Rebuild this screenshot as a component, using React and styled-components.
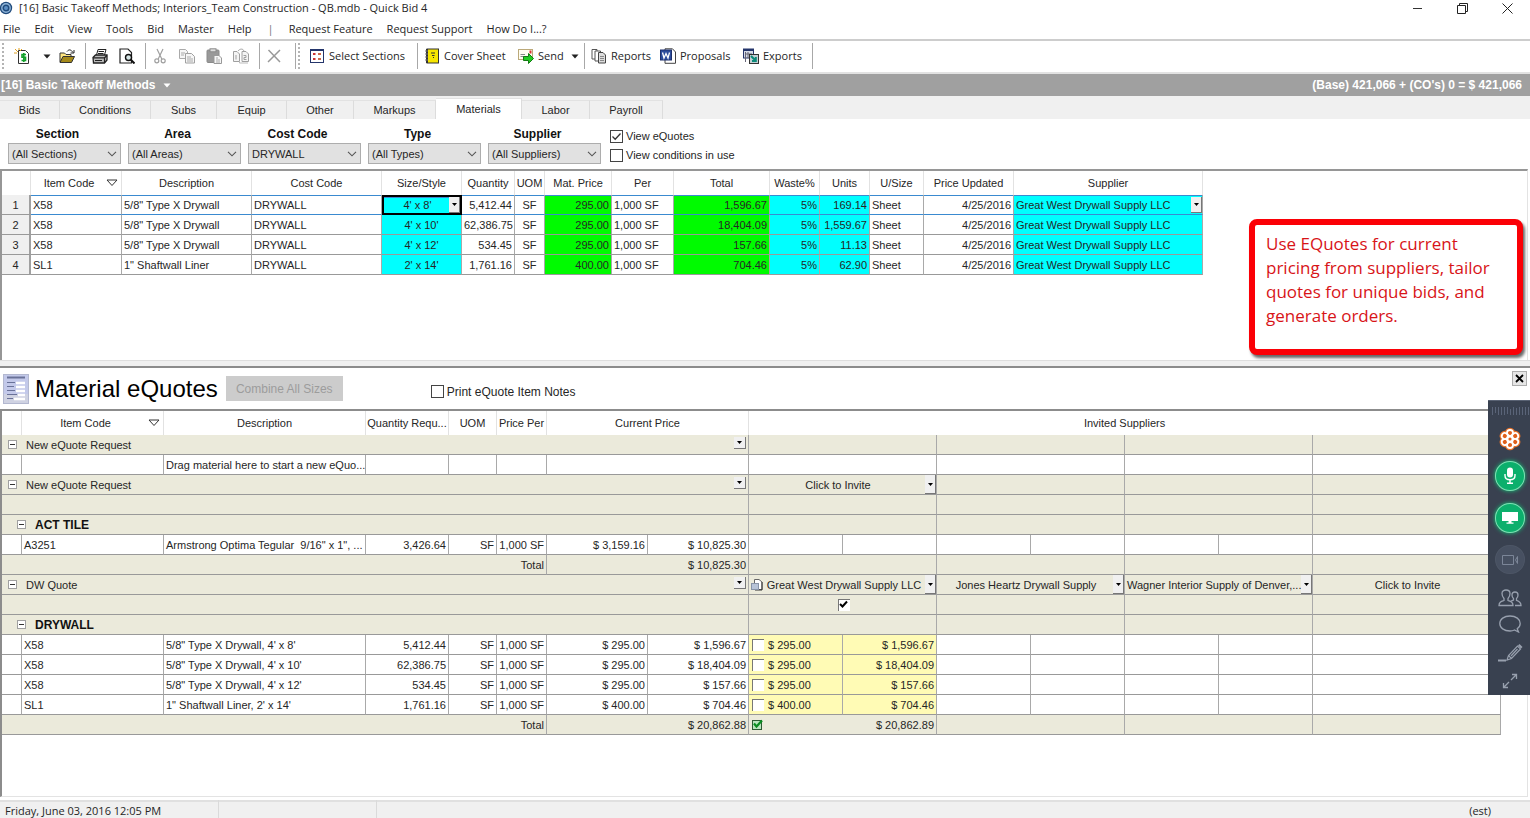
import React from "react";
import styled, { createGlobalStyle, css } from "styled-components";

const TABS = [
  { label: "Bids", width: 60 },
  { label: "Conditions", width: 91 },
  { label: "Subs", width: 66 },
  { label: "Equip", width: 70 },
  { label: "Other", width: 67 },
  { label: "Markups", width: 82 },
  { label: "Materials", width: 86, active: true },
  { label: "Labor", width: 68 },
  { label: "Payroll", width: 73 },
];

const FILTERS = [
  ["Section", "(All Sections)"],
  ["Area", "(All Areas)"],
  ["Cost Code", "DRYWALL"],
  ["Type", "(All Types)"],
  ["Supplier", "(All Suppliers)"],
];

const MATERIAL_COLS = [
  { label: "", width: 29 },
  { label: "Item Code", width: 91, sort: true },
  { label: "Description", width: 130 },
  { label: "Cost Code", width: 130 },
  { label: "Size/Style", width: 80, align: "center", bg: "#00ffff" },
  { label: "Quantity", width: 53, align: "right" },
  { label: "UOM", width: 30, align: "center" },
  { label: "Mat. Price", width: 67, align: "right", bg: "#00fb00" },
  { label: "Per", width: 62 },
  { label: "Total", width: 96, align: "right", bg: "#00fb00" },
  { label: "Waste%", width: 50, align: "right", bg: "#00ffff" },
  { label: "Units", width: 50, align: "right", bg: "#00ffff" },
  { label: "U/Size", width: 54 },
  { label: "Price Updated", width: 90, align: "right" },
  { label: "Supplier", width: 189, bg: "#00ffff" },
];

const MATERIALS = [
  ["1", "X58", "5/8\" Type X Drywall", "DRYWALL", "4' x 8'", "5,412.44", "SF", "295.00", "1,000 SF", "1,596.67", "5%", "169.14", "Sheet", "4/25/2016", "Great West Drywall Supply LLC"],
  ["2", "X58", "5/8\" Type X Drywall", "DRYWALL", "4' x 10'", "62,386.75", "SF", "295.00", "1,000 SF", "18,404.09", "5%", "1,559.67", "Sheet", "4/25/2016", "Great West Drywall Supply LLC"],
  ["3", "X58", "5/8\" Type X Drywall", "DRYWALL", "4' x 12'", "534.45", "SF", "295.00", "1,000 SF", "157.66", "5%", "11.13", "Sheet", "4/25/2016", "Great West Drywall Supply LLC"],
  ["4", "SL1", "1\" Shaftwall Liner", "DRYWALL", "2' x 14'", "1,761.16", "SF", "400.00", "1,000 SF", "704.46", "5%", "62.90", "Sheet", "4/25/2016", "Great West Drywall Supply LLC"],
];

const QUOTE_COLS = [20, 142, 202, 83, 48, 50, 101, 101, 94, 94, 94, 94, 94, 94, 94, 94];

const DRYWALL_ITEMS = [
  ["X58", "5/8\" Type X Drywall, 4' x 8'", "5,412.44", "$ 295.00", "$ 1,596.67"],
  ["X58", "5/8\" Type X Drywall, 4' x 10'", "62,386.75", "$ 295.00", "$ 18,404.09"],
  ["X58", "5/8\" Type X Drywall, 4' x 12'", "534.45", "$ 295.00", "$ 157.66"],
  ["SL1", "1\" Shaftwall Liner, 2' x 14'", "1,761.16", "$ 400.00", "$ 704.46"],
];

const App = () => {
  return (
    <React.Fragment>
      <GlobalStyle />
      <Window>
        <TitleBar>
          <AppIcon />
          <Title>[16] Basic Takeoff Methods; Interiors_Team Construction - QB.mdb - Quick Bid 4</Title>
          <WindowButtons />
        </TitleBar>
        <MenuBar>
          {["File", "Edit", "View", "Tools", "Bid", "Master", "Help"].map((m) => (
            <MenuItem key={m}>{m}</MenuItem>
          ))}
          <MenuBreak>|</MenuBreak>
          {["Request Feature", "Request Support", "How Do I...?"].map((m) => (
            <MenuItem key={m}>{m}</MenuItem>
          ))}
        </MenuBar>
        <Toolbar />
        <BidBar>
          <BidName>
            [16] Basic Takeoff Methods
            <Caret color="#fff" />
          </BidName>
          <span>(Base) 421,066 + (CO's) 0 = $ 421,066</span>
        </BidBar>
        <TabStrip role="tablist">
          {TABS.map((t) => (
            <Tab key={t.label} role="tab" aria-selected={!!t.active} $width={t.width} $active={t.active}>
              {t.label}
            </Tab>
          ))}
        </TabStrip>
        <Filters>
          {FILTERS.map(([label, value]) => (
            <Filter key={label}>
              <FilterLabel>{label}</FilterLabel>
              <SelectBox>
                <Select defaultValue={value}>
                  <option>{value}</option>
                </Select>
                <SelectArrow viewBox="0 0 10 6">
                  <path d="M1 0.8 L5 4.8 L9 0.8" fill="none" stroke="#555" strokeWidth="1.1" />
                </SelectArrow>
              </SelectBox>
            </Filter>
          ))}
          <CheckList>
            <Check label="View eQuotes" checked />
            <Check label="View conditions in use" />
          </CheckList>
        </Filters>
        <MaterialPane>
          <MaterialGrid />
        </MaterialPane>
        <Splitter />
        <QuotePane>
          <QuoteHeader>
            <QuoteIcon />
            <QuoteTitle>Material eQuotes</QuoteTitle>
            <CombineButton disabled>Combine All Sizes</CombineButton>
            <Check label="Print eQuote Item Notes" large />
            <CloseButton aria-label="Close">
              <svg width="9" height="9" viewBox="0 0 9 9">
                <path d="M1 1 L8 8 M8 1 L1 8" stroke="#000" strokeWidth="1.8" />
              </svg>
            </CloseButton>
          </QuoteHeader>
          <QuoteBody>
            <QuoteGrid />
          </QuoteBody>
        </QuotePane>
        <StatusBar>
          <StatusCell $width={219}>Friday, June 03, 2016 12:05 PM</StatusCell>
          <StatusCell $width={158} />
          <StatusEnd>(est)</StatusEnd>
        </StatusBar>
        <Callout>
          Use EQuotes for current pricing from suppliers, tailor quotes for unique bids, and generate orders.
        </Callout>
        <MeetingPanel />
      </Window>
    </React.Fragment>
  );
};

const Check = ({ label, checked, large }) => (
  <CheckLabel $large={large}>
    <CheckBox>
      <input type="checkbox" defaultChecked={checked} />
      {checked && (
        <svg width="11" height="11" viewBox="0 0 11 11">
          <path d="M1.5 5.5 L4.2 8.2 L9.5 2.5" fill="none" stroke="#333" strokeWidth="1.3" />
        </svg>
      )}
    </CheckBox>
    {label}
  </CheckLabel>
);

const Caret = ({ color = "#222" }) => (
  <svg width="8" height="5" viewBox="0 0 8 5">
    <path d="M0.5 0.5 H7.5 L4 4.5 Z" fill={color} />
  </svg>
);

const SmallCaret = () => (
  <svg width="5" height="3" viewBox="0 0 5 3">
    <path d="M0 0 H5 L2.5 3 Z" fill="#000" />
  </svg>
);

const SortArrow = () => (
  <svg width="12" height="8" viewBox="0 0 12 8">
    <path d="M1 1 H11 L6 6.5 Z" fill="none" stroke="#333" />
  </svg>
);

const MaterialGrid = () => (
  <Grid>
    <colgroup>
      {MATERIAL_COLS.map((c, i) => (
        <Col key={i} $width={c.width} />
      ))}
    </colgroup>
    <thead>
      <tr>
        {MATERIAL_COLS.map((c, i) => (
          <HeadCell key={i}>
            {c.sort ? (
              <SortHead>
                <span>{c.label}</span>
                <SortArrow />
              </SortHead>
            ) : (
              c.label
            )}
          </HeadCell>
        ))}
      </tr>
    </thead>
    <tbody>
      {MATERIALS.map((row, r) => (
        <tr key={r}>
          {row.map((value, i) => {
            const col = MATERIAL_COLS[i];
            if (i === 0) {
              return <RowNumber key={i}>{value}</RowNumber>;
            }
            if (r === 0 && (i === 4 || i === 14)) {
              return (
                <Cell key={i} $bg={col.bg} $selected $focused={i === 4} $flush>
                  <DropCell $align={i === 4 ? "center" : "left"}>
                    <span>{value}</span>
                    <CellDrop aria-label={`Choose ${col.label}`}>
                      <SmallCaret />
                    </CellDrop>
                  </DropCell>
                </Cell>
              );
            }
            return (
              <Cell key={i} $align={col.align} $bg={col.bg} $selected={r === 0}>
                {value}
              </Cell>
            );
          })}
        </tr>
      ))}
    </tbody>
  </Grid>
);

const GroupLead = ({ name }) => (
  <Cell colSpan={8} $bg={BEIGE} $flush>
    <GroupBox>
      <Expander aria-label={`Collapse ${name}`} />
      <GroupName>{name}</GroupName>
      <GroupDrop aria-label={`${name} options`}>
        <SmallCaret />
      </GroupDrop>
    </GroupBox>
  </Cell>
);

const Supplier = ({ name, drop, icon }) => (
  <Cell colSpan={2} $bg={BEIGE} $flush>
    <SupplierBox>
      {icon && <DocIcon />}
      <SupplierName>{name}</SupplierName>
      {drop && (
        <CellDrop aria-label={`${name} options`}>
          <SmallCaret />
        </CellDrop>
      )}
    </SupplierBox>
  </Cell>
);

const EmptySuppliers = ({ from = 0, bg }) =>
  [0, 1, 2, 3].slice(from).map((n) => <Cell key={n} colSpan={2} $bg={bg} />);

const EmptyPrices = ({ from = 0 }) => (
  <React.Fragment>
    {[0, 1, 2].slice(from).map((n) => (
      <React.Fragment key={n}>
        <Cell />
        <Cell />
      </React.Fragment>
    ))}
    <Cell colSpan={2} />
  </React.Fragment>
);

const SectionRow = ({ name }) => (
  <tr>
    <Cell colSpan={8} $bg={BEIGE} $flush>
      <GroupBox $nested>
        <Expander aria-label={`Collapse ${name}`} />
        <GroupName $bold>{name}</GroupName>
      </GroupBox>
    </Cell>
    <EmptySuppliers bg={BEIGE} />
  </tr>
);

const ItemCells = ({ item }) => {
  const [code, description, quantity, price, total] = item;
  return (
    <React.Fragment>
      <Cell />
      <Cell>{code}</Cell>
      <Cell $tight>{description}</Cell>
      <Cell $align="right">{quantity}</Cell>
      <Cell $align="right">SF</Cell>
      <Cell $align="right">1,000 SF</Cell>
      <Cell $align="right">{price}</Cell>
      <Cell $align="right">{total}</Cell>
    </React.Fragment>
  );
};

const QuoteGrid = () => (
  <Grid>
    <colgroup>
      {QUOTE_COLS.map((w, i) => (
        <Col key={i} $width={w} />
      ))}
    </colgroup>
    <thead>
      <tr>
        <HeadCell />
        <HeadCell>
          <SortHead>
            <span>Item Code</span>
            <SortArrow />
          </SortHead>
        </HeadCell>
        <HeadCell>Description</HeadCell>
        <HeadCell>Quantity Requ...</HeadCell>
        <HeadCell>UOM</HeadCell>
        <HeadCell>Price Per</HeadCell>
        <HeadCell colSpan={2}>Current Price</HeadCell>
        <HeadCell colSpan={8}>Invited Suppliers</HeadCell>
      </tr>
    </thead>
    <tbody>
      <tr>
        <GroupLead name="New eQuote Request" />
        <EmptySuppliers bg={BEIGE} />
      </tr>
      <tr>
        <Cell />
        <Cell />
        <Cell $tight>Drag material here to start a new eQuo...</Cell>
        <Cell />
        <Cell />
        <Cell />
        <Cell colSpan={2} />
        <EmptySuppliers />
      </tr>
      <tr>
        <GroupLead name="New eQuote Request" />
        <Supplier name="Click to Invite" drop />
        <EmptySuppliers from={1} bg={BEIGE} />
      </tr>
      <tr>
        <Cell colSpan={8} $bg={BEIGE} />
        <EmptySuppliers bg={BEIGE} />
      </tr>
      <SectionRow name="ACT TILE" />
      <tr>
        <ItemCells item={["A3251", "Armstrong Optima Tegular\u00a0 9/16\" x 1\", ...", "3,426.64", "$ 3,159.16", "$ 10,825.30"]} />
        <EmptyPrices />
      </tr>
      <tr>
        <Cell colSpan={6} $align="right" $bg={BEIGE}>Total</Cell>
        <Cell colSpan={2} $align="right" $bg={BEIGE}>$ 10,825.30</Cell>
        <EmptySuppliers bg={BEIGE} />
      </tr>
      <tr>
        <GroupLead name="DW Quote" />
        <Supplier name="Great West Drywall Supply LLC" icon drop />
        <Supplier name="Jones Heartz Drywall Supply" drop />
        <Supplier name="Wagner Interior Supply of Denver,..." drop />
        <Supplier name="Click to Invite" />
      </tr>
      <tr>
        <Cell colSpan={8} $bg={BEIGE} />
        <Cell colSpan={2} $bg={BEIGE} $flush>
          <SupplierBox $center>
            <SunkenCheck>
              <input type="checkbox" aria-label="Use this supplier" defaultChecked />
              <svg width="9" height="9" viewBox="0 0 9 9">
                <path d="M1 4 L3.5 6.5 L8 1.5" fill="none" stroke="#000" strokeWidth="2" />
              </svg>
            </SunkenCheck>
          </SupplierBox>
        </Cell>
        <EmptySuppliers from={1} bg={BEIGE} />
      </tr>
      <SectionRow name="DRYWALL" />
      {DRYWALL_ITEMS.map((item, i) => (
        <tr key={i}>
          <ItemCells item={item} />
          <Cell $bg="#fffbb5" $flush>
            <OfferBox>
              <SunkenCheck>
                <input type="checkbox" aria-label={`Accept ${item[1]}`} />
              </SunkenCheck>
              {item[3]}
            </OfferBox>
          </Cell>
          <Cell $bg="#fffbb5" $align="right">{item[4]}</Cell>
          <EmptyPrices from={1} />
        </tr>
      ))}
      <tr>
        <Cell colSpan={6} $align="right" $bg={BEIGE}>Total</Cell>
        <Cell colSpan={2} $align="right" $bg={BEIGE}>$ 20,862.88</Cell>
        <Cell colSpan={2} $bg={BEIGE} $flush>
          <TotalBox>
            <svg width="11" height="11" viewBox="0 0 11 11">
              <rect x="0.5" y="1.5" width="9" height="9" fill="#b9e6bf" stroke="#2c5c34" />
              <path d="M2 4.5 L4.5 7.5 L10 1.5" fill="none" stroke="#0a8d22" strokeWidth="2.2" />
            </svg>
            <span>$ 20,862.89</span>
          </TotalBox>
        </Cell>
        <EmptySuppliers from={1} bg={BEIGE} />
      </tr>
    </tbody>
  </Grid>
);

const Toolbar = () => (
  <ToolRow>
    <ToolGroup $left={8} $right={9} $grip>
      <Tool $width={28} aria-label="New bid">
        <Icon>
          <path d="M4.5 2.5 H11.5 L14.5 5.5 V15.5 H4.5 Z" fill="#fff" stroke="#333" />
          <path d="M1 1 L4 4 M0 5 H3 M5 0 V2 M8 1 L6 3" stroke="#e0a020" />
          <path d="M12 6.5 H8 V9.3 H11.5 V12.5 H7.5 M9.8 5 V14" fill="none" stroke="#12a02a" strokeWidth="1.6" />
        </Icon>
      </Tool>
      <Tool $width={22} aria-label="New bid options">
        <Caret />
      </Tool>
      <Tool $width={18} aria-label="Open">
        <Icon>
          <path d="M1 14 V5 H5.5 L7 6.5 H12 V8" fill="#ffe680" stroke="#333" />
          <path d="M1 14.5 L4 8.5 H15.5 L12.5 14.5 Z" fill="#a58a1a" stroke="#333" />
          <path d="M8 3.5 C10 1 12 1.5 14 4.5 M15 2 V5 H11.5" fill="none" stroke="#222" />
        </Icon>
      </Tool>
    </ToolGroup>
    <ToolGroup $right={5}>
      <Tool $width={27} aria-label="Print">
        <Icon>
          <path d="M4.5 7 L6 1.5 H14 L12.5 7" fill="#fff" stroke="#222" />
          <path d="M6.5 3.5 H12 M6 5.5 H11.5" stroke="#222" />
          <path d="M1 9.5 L3.5 7 H15 V12 L12.5 15 H1.5 Z" fill="#bbb" stroke="#222" strokeWidth="1.3" />
          <path d="M1 9.8 H12.5 L15 7.5 M12.5 10 V15 M3 12.5 H10" fill="none" stroke="#222" strokeWidth="1.2" />
        </Icon>
      </Tool>
      <Tool $width={27} aria-label="Print preview">
        <Icon>
          <path d="M1 1 H9 L12.5 4.5 V15 H1 Z" fill="#fff" stroke="#222" strokeWidth="1.2" />
          <circle cx="9.5" cy="9.5" r="3" fill="#d6e6e6" stroke="#111" strokeWidth="1.4" />
          <path d="M11.5 11.5 L15.5 15.5" stroke="#111" strokeWidth="2" />
        </Icon>
      </Tool>
    </ToolGroup>
    <ToolGroup $right={5}>
      <Tool $width={27} aria-label="Cut">
        <Icon>
          <path d="M5 1 L9.8 11 M11 1 L6.2 11" stroke="#a0a0a0" strokeWidth="1.2" />
          <circle cx="4.8" cy="12.8" r="2" fill="none" stroke="#a0a0a0" strokeWidth="1.2" />
          <circle cx="11.2" cy="12.8" r="2" fill="none" stroke="#a0a0a0" strokeWidth="1.2" />
        </Icon>
      </Tool>
      <Tool $width={27} aria-label="Copy">
        <Icon>
          <path d="M0.5 1.5 H6.5 L8.5 3.5 V10.5 H0.5 Z" fill="#f6f6f6" stroke="#aaa" />
          <path d="M6.5 5.5 H12.5 L15.5 8.5 V15 H6.5 Z" fill="#f6f6f6" stroke="#a0a0a0" />
          <path d="M2 5 H6 M2 7 H5 M8 9 H12 M8 11 H14 M8 13 H14" stroke="#aaa" />
        </Icon>
      </Tool>
      <Tool $width={27} aria-label="Paste">
        <Icon>
          <rect x="1" y="2" width="12" height="12.5" rx="1" fill="#999" stroke="#8a8a8a" />
          <rect x="4" y="0.8" width="6" height="3" fill="#ddd" stroke="#8a8a8a" />
          <path d="M8 7.5 H13 L15.5 10 V15.5 H8 Z" fill="#f6f6f6" stroke="#999" />
          <path d="M10 10 H12 M10 12 H14 M10 14 H14" stroke="#aaa" />
        </Icon>
      </Tool>
      <Tool $width={27} aria-label="Duplicate">
        <Icon>
          <path d="M0.5 3.5 H4 L6.5 6 V13.5 H0.5 Z M9 3.5 H13 L15.5 6 V13.5 H9 Z" fill="#f4f4f4" stroke="#a0a0a0" />
          <path d="M3 7 V11.5 M5 3 C7 0.5 10 0.5 11 3 M10.5 7.5 H13 V9.5 H11 V11.5 H13.5" fill="none" stroke="#a0a0a0" />
          <path d="M6.5 13.5 V15 H15" fill="none" stroke="#bbb" />
        </Icon>
      </Tool>
    </ToolGroup>
    <ToolGroup $right={8}>
      <Tool $width={27} aria-label="Delete">
        <Icon>
          <path d="M2.5 2 L14 14 M14 2 L2 14" stroke="#999" strokeWidth="1.5" />
        </Icon>
      </Tool>
    </ToolGroup>
    <ToolGroup $left={13} $grip>
      <Tool $width={108} $text>
        <Icon>
          <rect x="1.5" y="1.5" width="13" height="13" fill="#fff" stroke="#24356b" />
          <path d="M1.5 2 H14.5" stroke="#24356b" strokeWidth="2" />
          <path d="M4 6 H6.5 M4 11 H6.5" stroke="#c33" strokeWidth="2" />
          <path d="M9 6 H12 M9 11 H12" stroke="#cc6a4a" strokeWidth="2" />
        </Icon>
        Select Sections
      </Tool>
    </ToolGroup>
    <ToolGroup $left={6}>
      <Tool $width={94} $text>
        <Icon>
          <rect x="3" y="1" width="11.5" height="14" fill="#f7e600" stroke="#333" />
          <path d="M3 1 V15" stroke="#333" strokeWidth="2" />
          <path d="M1 3 H4 M1 6 H4 M1 9 H4 M1 12 H4" stroke="#777" />
          <path d="M7 5 H11 M8 7.5 H10.5 M9 9.5 H10" stroke="#333" />
        </Icon>
        Cover Sheet
      </Tool>
      <Tool $width={48} $text>
        <Icon>
          <rect x="0.5" y="1.5" width="14" height="10" fill="#fffdf0" stroke="#bba97a" />
          <path d="M2.5 6.5 H7 M2.5 8.5 H6" stroke="#888" />
          <rect x="11.5" y="2.5" width="2" height="3" fill="#d33" />
          <path d="M5.5 8.5 H10.5 V5.5 L15.5 10.5 L10.5 15.5 V12.5 H5.5 Z" fill="#22cc22" stroke="#127a12" />
        </Icon>
        Send
      </Tool>
      <Tool $width={18} aria-label="Send options">
        <Caret />
      </Tool>
    </ToolGroup>
    <ToolGroup $left={6}>
      <Tool $width={69} $text>
        <Icon>
          <path d="M1 1.5 H6 V11 H1 Z" fill="#fff" stroke="#555" />
          <path d="M4 3 H9.5 V13 H4 Z" fill="#fff" stroke="#555" />
          <path d="M7.5 4.5 H12 L14.5 7 V15 H7.5 Z" fill="#ddd" stroke="#444" />
          <path d="M9 8.5 H13 M9 10.5 H13 M9 12.5 H13" stroke="#888" />
        </Icon>
        Reports
      </Tool>
      <Tool $width={83} $text>
        <Icon>
          <path d="M5 0.8 H12.5 L15.5 4 V15.3 H5 Z" fill="#fff" stroke="#444" />
          <rect x="0.5" y="2" width="11" height="10" fill="#2c4c9c" stroke="#1c2f6c" />
          <path d="M2.5 4.5 L4 10 L6 5.5 L8 10 L9.5 4.5" fill="none" stroke="#fff" strokeWidth="1.3" />
        </Icon>
        Proposals
      </Tool>
      <Tool $width={69} $text>
        <Icon>
          <rect x="0.5" y="1" width="10" height="9" fill="#d5dbe8" stroke="#24356b" />
          <path d="M0.5 2 H10.5" stroke="#24356b" strokeWidth="2" />
          <path d="M2.5 4 V14 M5 4 V10 M2 6 H9" stroke="#667" />
          <rect x="6.5" y="6.5" width="9" height="9" fill="#c3cfd4" stroke="#333" />
          <path d="M8 8 L12.5 12.5 M12.8 9 V13 H9" fill="none" stroke="#0a8a7a" strokeWidth="2" />
        </Icon>
        Exports
      </Tool>
    </ToolGroup>
  </ToolRow>
);

const AppIcon = () => (
  <svg width="13" height="14" viewBox="0 0 13 14">
    <circle cx="6" cy="7" r="6.2" fill="#1f4a7c" />
    <circle cx="6" cy="7" r="4.2" fill="none" stroke="#8fb4d8" strokeWidth="1.4" />
    <circle cx="6" cy="7" r="2" fill="#5d8fc4" />
  </svg>
);

const WindowButtons = () => (
  <WinButtons>
    <button aria-label="Minimize">
      <svg width="11" height="11" viewBox="0 0 11 11">
        <path d="M1 5.5 H10" stroke="#333" />
      </svg>
    </button>
    <button aria-label="Restore">
      <svg width="11" height="11" viewBox="0 0 11 11">
        <path d="M2.5 2.5 V0.5 H10.5 V8.5 H8.5 M0.5 2.5 H8.5 V10.5 H0.5 Z" fill="none" stroke="#222" />
      </svg>
    </button>
    <button aria-label="Close window">
      <svg width="11" height="11" viewBox="0 0 11 11">
        <path d="M0.5 0.5 L10.5 10.5 M10.5 0.5 L0.5 10.5" stroke="#222" />
      </svg>
    </button>
  </WinButtons>
);

const QuoteIcon = () => (
  <svg width="26" height="30" viewBox="0 0 26 30">
    <rect x="0.5" y="0.5" width="25" height="29" fill="#c3c9ea" stroke="#b3b8d0" />
    <rect x="1" y="20" width="24" height="9" fill="#cfd2e2" />
    <path d="M4 3.5 H22" stroke="#6a7299" strokeWidth="2" />
    <path d="M13 9 H22 M13 13 H22 M13 17 H22 M15 21 H22 M11 25 H22" stroke="#fff" strokeWidth="2.4" />
    <path d="M4 8.5 H12 M4 12.5 H11 M4 16.5 H12 M4 20.5 H14 M4 24.5 H10" stroke="#6a7299" strokeWidth="1.2" />
  </svg>
);

const DocIcon = () => (
  <svg width="12" height="12" viewBox="0 0 12 12">
    <path d="M3.5 0.5 H8 L11 3 V10.5 H3.5 Z" fill="#fff" stroke="#666" />
    <path d="M11 3 V11 H4" fill="none" stroke="#333" />
    <rect x="0.5" y="4.5" width="7" height="6" fill="#b8c4d8" stroke="#8894a8" />
  </svg>
);

const MeetingPanel = () => (
  <Panel>
    <svg width="38" height="10" viewBox="0 0 38 10">
      <path
        d="M1.5 1 V9 M4.5 1 V7 M7.5 1 V9 M10.5 1 V9 M13.5 1 V9 M16.5 1 V8 M19.5 3 V9 M22.5 1 V9 M25.5 2 V9 M28.5 1 V9 M31.5 1 V9 M34.5 1 V9 M37.5 1 V9"
        stroke="#5a6478"
      />
    </svg>
    <PanelButton aria-label="Meeting" $height={46}>
      <svg width="24" height="24" viewBox="0 0 24 24">
        {[0, 60, 120, 180, 240, 300].map((a) => (
          <circle key={a} cx="12" cy="6" r="5.2" fill="#e8732a" transform={`rotate(${a} 12 12)`} />
        ))}
        {[0, 60, 120, 180, 240, 300].map((a) => (
          <circle key={a} cx="12" cy="6" r="3" fill="#e0601a" stroke="#fff" strokeWidth="1.8" transform={`rotate(${a} 12 12)`} />
        ))}
        <circle cx="12" cy="12" r="2.4" fill="#e0601a" stroke="#fff" strokeWidth="1.6" />
      </svg>
    </PanelButton>
    <RoundButton aria-label="Microphone" $on>
      <svg width="16" height="18" viewBox="0 0 16 18">
        <rect x="5" y="0.5" width="6" height="10" rx="3" fill="#fff" />
        <path d="M3 7 V8.5 C3 11.5 5 12.8 8 12.8 C11 12.8 13 11.5 13 8.5 V7 M8 13 V16 M5 16.2 H11" fill="none" stroke="#fff" strokeWidth="1.4" />
      </svg>
    </RoundButton>
    <RoundButton aria-label="Share screen" $on>
      <svg width="18" height="14" viewBox="0 0 18 14">
        <path d="M1 1 H17 V10 H1 Z M7.5 10 H10.5 V11.5 H12.5 V12.8 H5.5 V11.5 H7.5 Z" fill="#fff" />
      </svg>
    </RoundButton>
    <RoundButton aria-label="Camera">
      <svg width="18" height="12" viewBox="0 0 18 12">
        <path d="M1.5 1.5 H12.5 V10.5 H1.5 Z M16.5 2.5 L14.5 6 L16.5 9.5 Z" fill="none" stroke="#7c8698" />
      </svg>
    </RoundButton>
    <PanelButton aria-label="Attendees" $height={24}>
      <svg width="24" height="18" viewBox="0 0 24 18">
        <path d="M1 16.5 C1 13 3 12.5 6 11.5 V9.5 C4.5 8 4 6 4 4.5 C4 2 6 1 8 1 C10 1 12 2 12 4.5 C12 6 11.5 8 10 9.5 V11.5 C13 12.5 15 13 15 16.5 Z" fill="none" stroke="#98a0ae" strokeWidth="1.3" />
        <path d="M13 12 C14 11.7 15 11.5 15.5 11 V9.5 C14.3 8.5 14 7 14 6 C14 4 15.3 3 17 3 C18.7 3 20 4 20 6 C20 7 19.7 8.5 18.5 9.5 V11.3 C21 12 23 12.8 23 16.5 H17" fill="none" stroke="#98a0ae" strokeWidth="1.3" />
      </svg>
    </PanelButton>
    <PanelButton aria-label="Chat" $height={28}>
      <svg width="24" height="18" viewBox="0 0 24 18">
        <path d="M16.5 15 C15 15.7 13.6 16 12 16 C6 16 1.8 12.8 1.8 8.5 C1.8 4.2 6 1 12 1 C18 1 22.2 4.2 22.2 8.5 C22.2 10.5 21 12.5 19.2 13.8 L20.5 17 Z" fill="none" stroke="#98a0ae" strokeWidth="1.3" />
      </svg>
    </PanelButton>
    <PanelButton aria-label="Draw" $height={30}>
      <svg width="26" height="20" viewBox="0 0 26 20">
        <path d="M1 17.5 H9" stroke="#98a0ae" strokeWidth="2" />
        <path d="M10 17 L11.5 12.5 L20.5 3 L23.5 6 L14.5 15.5 Z M11.5 12.5 L14.5 15.5 M20.5 6 L14 13" fill="none" stroke="#98a0ae" strokeWidth="1.2" />
        <path d="M21 2.5 L22.5 1 L25.5 4 L24 5.5 Z" fill="#98a0ae" />
      </svg>
    </PanelButton>
    <PanelButton aria-label="Full screen" $height={28}>
      <svg width="16" height="16" viewBox="0 0 16 16">
        <path d="M9 7 L14.5 1.5 M10 1.5 H14.5 V6 M7 9 L1.5 14.5 M1.5 10 V14.5 H6" fill="none" stroke="#98a0ae" strokeWidth="1.3" />
      </svg>
    </PanelButton>
  </Panel>
);

const BEIGE = "#ebeadb";
const UI_FONT = `"Open Sans", "Noto Sans", sans-serif`;
const GRID_FONT = `"Liberation Sans", Arial, sans-serif`;

const GlobalStyle = createGlobalStyle`
  * {
    box-sizing: border-box;
  }

  body {
    margin: 0;
    background: #fff;
    color: #262626;
    font: 11px/14px ${GRID_FONT};
  }

  button, input, select {
    margin: 0;
    padding: 0;
    border: 0;
    background: none;
    color: inherit;
    font: inherit;
  }

  svg {
    display: block;
    flex: none;
  }
`;

const Window = styled.div`
  position: relative;
  display: flex;
  flex-direction: column;
  height: 100vh;
  overflow: hidden;
`;

const TitleBar = styled.header`
  display: flex;
  align-items: center;
  gap: 6px;
  height: 16px;
  font-family: ${UI_FONT};
`;

const Title = styled.span`
  flex: 1;
`;

const WinButtons = styled.div`
  display: flex;

  button {
    display: flex;
    justify-content: center;
    width: 45px;
  }
`;

const MenuBar = styled.nav`
  display: flex;
  align-items: center;
  gap: 14px;
  height: 25px;
  padding: 2px 0 0 3px;
  border-bottom: 2px solid #cdcdcd;
  font-family: ${UI_FONT};
`;

const MenuItem = styled.button`
  white-space: nowrap;
`;

const MenuBreak = styled.span`
  padding: 0 1px 0 2px;
  color: #777;
`;

const ToolRow = styled.div`
  display: flex;
  height: 33px;
  padding: 2px 0 3px;
  border-bottom: 2px solid #e2e2e2;
`;

const ToolGroup = styled.div`
  display: flex;
  align-items: center;
  padding-left: ${(props) => props.$left || 0}px;
  padding-right: ${(props) => props.$right || 0}px;
  border-right: 1px solid #a8a8a8;
  ${(props) =>
    props.$grip &&
    css`
      background: repeating-linear-gradient(#b4b4b4 0 2px, #fff 2px 4px) 2px 0 / 2px 100% no-repeat;
    `}
`;

const Tool = styled.button`
  display: flex;
  align-items: center;
  justify-content: ${(props) => (props.$text ? "flex-start" : "center")};
  gap: 4px;
  width: ${(props) => props.$width}px;
  font-family: ${UI_FONT};
  white-space: nowrap;
`;

const Icon = styled.svg.attrs({ width: 16, height: 16, viewBox: "0 0 16 16" })``;

const BidBar = styled.div`
  display: flex;
  align-items: center;
  justify-content: space-between;
  height: 22px;
  padding: 0 8px 0 1px;
  background: #a0a0a0;
  color: #fff;
  font-size: 12px;
  font-weight: bold;
`;

const BidName = styled.span`
  display: flex;
  align-items: center;
  gap: 8px;
`;

const TabStrip = styled.div`
  display: flex;
  align-items: flex-end;
  height: 23px;
  padding-top: 2px;
  background: #f0f0f0;
`;

const Tab = styled.button`
  align-self: ${(props) => (props.$active ? "stretch" : "flex-end")};
  width: ${(props) => props.$width}px;
  height: ${(props) => (props.$active ? "auto" : "19px")};
  border-right: 1px solid #dcdcdc;
  border-top: 1px solid #e2e2e2;
  background: ${(props) => (props.$active ? "#fff" : "#f0f0f0")};
`;

const Filters = styled.section`
  display: flex;
  gap: 7px;
  height: 50px;
  padding: 8px 8px 0;
`;

const Filter = styled.label`
  width: 113px;
`;

const FilterLabel = styled.span`
  display: block;
  height: 16px;
  padding-right: 14px;
  color: #111;
  font-size: 12px;
  font-weight: bold;
  text-align: center;
`;

const SelectBox = styled.span`
  display: grid;
  align-items: center;
`;

const Select = styled.select`
  grid-area: 1 / 1;
  width: 100%;
  height: 21px;
  padding: 0 3px;
  appearance: none;
  border: 1px solid #adadad;
  background: #e1e1e1;
`;

const SelectArrow = styled.svg`
  grid-area: 1 / 1;
  justify-self: end;
  width: 10px;
  height: 6px;
  margin-right: 4px;
  pointer-events: none;
`;

const CheckList = styled.div`
  display: flex;
  flex-direction: column;
  gap: 5px;
  padding: 2px 0 0 2px;
`;

const CheckLabel = styled.label`
  display: flex;
  align-items: center;
  gap: 3px;
  padding-top: ${(props) => (props.$large ? 6 : 0)}px;
  font-size: ${(props) => (props.$large ? 12 : 11)}px;
`;

const CheckBox = styled.span`
  display: grid;
  place-items: center;

  input {
    grid-area: 1 / 1;
    width: 13px;
    height: 13px;
    appearance: none;
    border: 1px solid #444;
    background: #fff;
  }

  svg {
    grid-area: 1 / 1;
    pointer-events: none;
  }
`;

const MaterialPane = styled.section`
  flex: 0 0 191px;
  margin-right: 2px;
  border-top: 2px solid #969696;
  border-left: 2px solid #969696;
  border-right: 1px solid #e3e3e3;
  overflow: hidden;
`;

const Splitter = styled.div`
  height: 8px;
  border-top: 1px solid #dedede;
  border-bottom: 2px solid #8c8c8c;
  background: #f0f0f0;
`;

const QuotePane = styled.section`
  display: flex;
  flex: 1;
  flex-direction: column;
  min-height: 0;
`;

const QuoteHeader = styled.header`
  display: flex;
  align-items: center;
  height: 41px;
  padding: 0 3px;
`;

const QuoteTitle = styled.h1`
  margin: 0 8px 0 6px;
  color: #000;
  font-size: 24px;
  font-weight: normal;
  line-height: 30px;
`;

const CombineButton = styled.button`
  width: 117px;
  height: 25px;
  margin-right: 88px;
  background: #cccccc;
  color: #9c9c9c;
  font-size: 12px;
`;

const CloseButton = styled.button`
  display: grid;
  place-items: center;
  align-self: flex-start;
  width: 15px;
  height: 15px;
  margin: 3px 0 0 auto;
  border: 1px solid #adadad;
  background: #e6e6e6;
`;

const QuoteBody = styled.div`
  flex: 1;
  margin-right: 2px;
  border-top: 2px solid #8c8c8c;
  border-left: 2px solid #8c8c8c;
  border-right: 1px solid #e3e3e3;
  border-bottom: 1px solid #e3e3e3;
  overflow: hidden;
`;

const Grid = styled.table`
  width: 1px;
  table-layout: fixed;
  border-collapse: separate;
  border-spacing: 0;
`;

const Col = styled.col`
  width: ${(props) => props.$width}px;
`;

const HeadCell = styled.th`
  height: 24px;
  padding: 0 1px;
  border-right: 1px solid #e2e2e2;
  font-weight: normal;
  white-space: nowrap;
  overflow: hidden;
`;

const SortHead = styled.span`
  display: flex;
  align-items: center;
  padding-right: 2px;

  span {
    flex: 1;
  }
`;

const Cell = styled.td`
  height: 20px;
  padding: ${(props) => (props.$flush ? "0" : props.$tight ? "0 0 0 2px" : "0 2px")};
  border-right: 1px solid #a9a9a9;
  border-bottom: 1px solid #999;
  background: ${(props) => props.$bg || "#fff"};
  text-align: ${(props) => props.$align || "left"};
  white-space: nowrap;
  overflow: hidden;
  ${(props) =>
    props.$selected &&
    css`
      border-bottom: 1px solid #3a8ad0;
      box-shadow: inset 0 1px #3a8ad0;
    `}
  ${(props) =>
    props.$focused &&
    css`
      border: 2px solid #000;
    `}
`;

const RowNumber = styled.th`
  height: 20px;
  padding: 0;
  border-right: 2px solid #a0a0a0;
  border-bottom: 1px solid #999;
  background: #f0f0f0;
  font-weight: normal;
`;

const DropCell = styled.div`
  display: flex;
  align-items: center;
  height: 16px;
  padding-left: 2px;

  span {
    flex: 1;
    text-align: ${(props) => props.$align};
  }
`;

const CellDrop = styled.button`
  display: grid;
  flex: none;
  place-items: center;
  align-self: stretch;
  width: 11px;
  border-right: 1px solid #777;
  border-bottom: 1px solid #777;
  background: #f0f0f0;
`;

const GroupBox = styled.div`
  display: flex;
  align-items: center;
  height: 19px;
  padding: 0 2px 0 ${(props) => (props.$nested ? 15 : 6)}px;
`;

const GroupName = styled.span`
  flex: 1;
  padding-left: 9px;
  color: ${(props) => (props.$bold ? "#111" : "inherit")};
  font-size: ${(props) => (props.$bold ? 12 : 11)}px;
  font-weight: ${(props) => (props.$bold ? "bold" : "normal")};
`;

const Expander = styled.button`
  width: 9px;
  height: 9px;
  border: 1px solid #a0a0a0;
  background: linear-gradient(#333, #333) center / 5px 1px no-repeat #fff;
`;

const GroupDrop = styled.button`
  display: grid;
  place-items: center;
  align-self: flex-start;
  width: 12px;
  height: 12px;
  margin-top: 2px;
  border-right: 1px solid #777;
  border-bottom: 1px solid #777;
  background: #f0f0f0;
`;

const SupplierBox = styled.div`
  display: flex;
  align-items: center;
  justify-content: ${(props) => (props.$center ? "center" : "flex-start")};
  height: 19px;
  padding-left: 2px;
`;

const SupplierName = styled.span`
  flex: 1;
  text-align: center;
`;

const SunkenCheck = styled.span`
  display: grid;
  place-items: center;

  input {
    grid-area: 1 / 1;
    width: 12px;
    height: 12px;
    appearance: none;
    border-top: 1px solid #777;
    border-left: 1px solid #777;
    background: #fff;
  }

  svg {
    grid-area: 1 / 1;
    pointer-events: none;
  }
`;

const OfferBox = styled.div`
  display: flex;
  align-items: center;
  gap: 4px;
  height: 19px;
  padding-left: 3px;
`;

const TotalBox = styled.div`
  display: flex;
  align-items: center;
  justify-content: space-between;
  height: 19px;
  padding: 0 2px 0 3px;
`;

const StatusBar = styled.footer`
  display: flex;
  height: 21px;
  border-top: 3px solid #fff;
  background: #f0f0f0;
  box-shadow: inset 0 2px #e0e0e0;
  font-family: ${UI_FONT};
`;

const StatusCell = styled.span`
  width: ${(props) => props.$width}px;
  padding: 4px 5px 0;
  border-right: 1px solid #dadada;
  white-space: nowrap;
`;

const StatusEnd = styled.span`
  margin-left: auto;
  padding: 4px 39px 0 0;
`;

// note floating over the lower right of the material list
const Callout = styled.aside`
  position: absolute;
  top: 219px;
  right: 7px;
  width: 274px;
  height: 136px;
  padding: 7px 11px;
  border: 6px solid #fb0006;
  border-radius: 8px;
  background: #fff;
  box-shadow: 2px 3px 3px rgba(0, 0, 0, 0.6);
  color: #d81418;
  font: 17px/24px ${UI_FONT};
`;

// screen sharing controls docked to the right edge
const Panel = styled.aside`
  position: absolute;
  top: 400px;
  right: 0;
  display: flex;
  flex-direction: column;
  align-items: center;
  width: 42px;
  height: 295px;
  padding: 5px 0 0 2px;
  border-top: 1px solid #596273;
  background: #394150;
`;

const PanelButton = styled.button`
  display: grid;
  place-items: center;
  width: 100%;
  height: ${(props) => props.$height}px;
`;

const RoundButton = styled.button`
  display: grid;
  place-items: center;
  width: 30px;
  height: 30px;
  margin-bottom: 12px;
  border: 1px solid ${(props) => (props.$on ? "#7fe0b4" : "#4d5666")};
  border-radius: 50%;
  background: ${(props) => (props.$on ? "#0caf6c" : "#475061")};
  box-shadow: ${(props) => (props.$on ? "0 0 4px #10c878" : "none")};
`;

export default App;
